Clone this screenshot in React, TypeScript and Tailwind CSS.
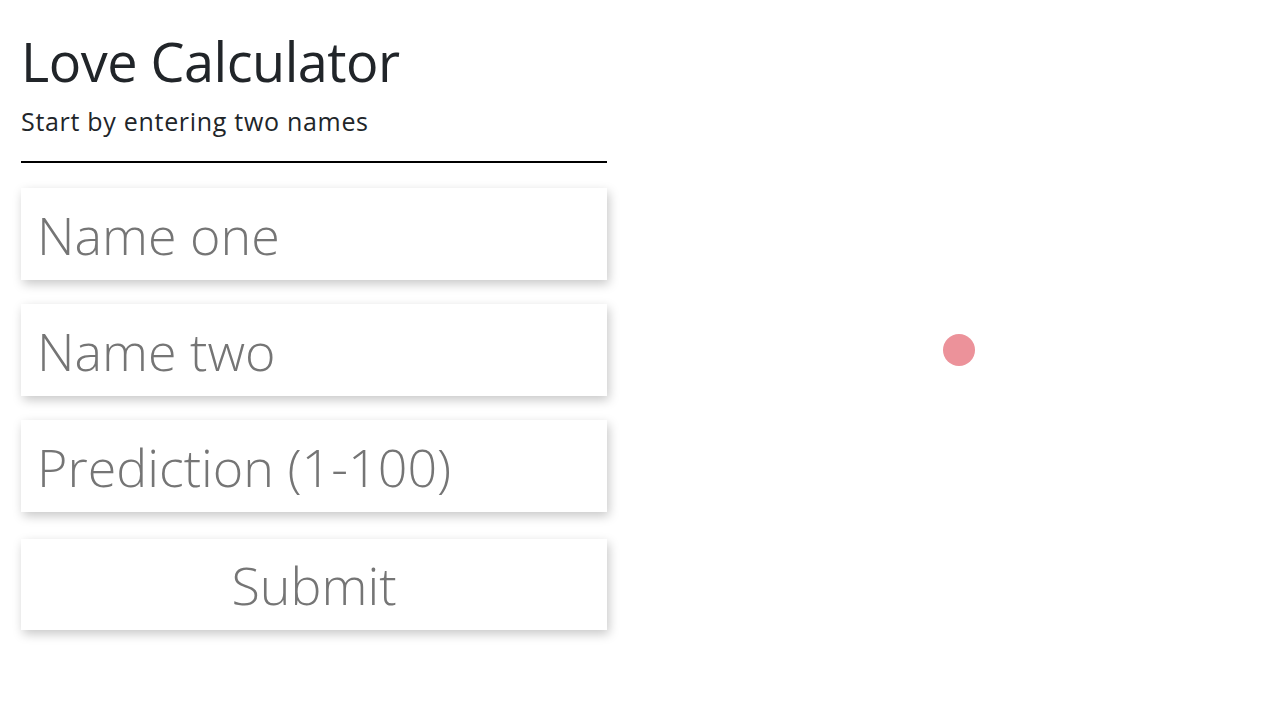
import { useState } from 'react'

export default function App() {
  const [nameOne, setNameOne] = useState('')
  const [nameTwo, setNameTwo] = useState('')
  const [prediction, setPrediction] = useState('')

  const fieldClass =
    'block w-full h-[92px] bg-white px-[16px] text-[52px] font-light text-[#757575] placeholder:text-[#757575] outline-none shadow-[2px_4px_10px_rgba(0,0,0,0.22)]'

  return (
    <div className="flex min-h-screen bg-white font-['Open_Sans',sans-serif] text-[#212529]">
      <div className="w-[586px] ml-[21px] pt-[26px]">
        <h1 className="text-[54px] leading-[70px] tracking-[-0.5px]">Love Calculator</h1>
        <p className="text-[25px] leading-[34px] mt-[8px] tracking-[0.7px]">Start by entering two names</p>
        <div className="h-[2px] bg-black mt-[23px] mb-[25px]"></div>

        <form
          onSubmit={e => e.preventDefault()}
          className="flex flex-col"
        >
          <input
            value={nameOne}
            onChange={e => setNameOne(e.target.value)}
            placeholder="Name one"
            className={fieldClass}
          />
          <input
            value={nameTwo}
            onChange={e => setNameTwo(e.target.value)}
            placeholder="Name two"
            className={`${fieldClass} mt-[24px]`}
          />
          <input
            value={prediction}
            onChange={e => setPrediction(e.target.value)}
            placeholder="Prediction (1-100)"
            className={`${fieldClass} mt-[24px]`}
          />
          <button
            type="submit"
            className="mt-[27px] h-[91px] w-full bg-white text-[52px] font-light text-[#757575] shadow-[2px_4px_10px_rgba(0,0,0,0.22)]"
          >
            Submit
          </button>
        </form>
      </div>

      <div className="flex-1 flex items-center justify-center h-[700px] pl-[47px]">
        <div className="w-[32px] h-[32px] rounded-full bg-[#ec929a]"></div>
      </div>
    </div>
  )
}
